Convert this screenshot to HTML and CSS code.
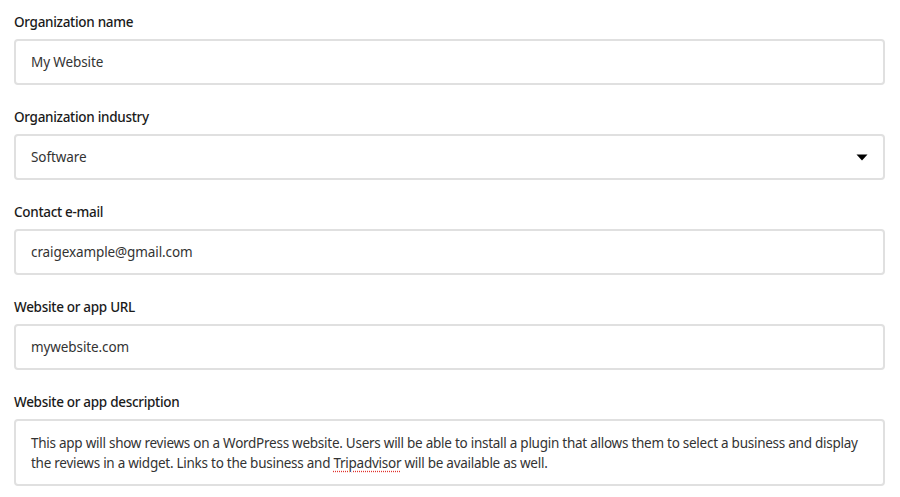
FILE: index.html
```html
<!DOCTYPE html>
<html lang="en">
<head>
<meta charset="utf-8">
<title>Organization form</title>
<link rel="stylesheet" href="styles.css">
</head>
<body>
<form class="form">
  <div class="field">
    <label class="label">Organization name</label>
    <div class="box">My Website</div>
  </div>
  <div class="field">
    <label class="label">Organization industry</label>
    <div class="box select">
      <span>Software</span>
      <svg class="caret" width="12" height="7" viewBox="0 0 12 7"><path d="M0.5 0.5 L11.5 0.5 L6 6.5 Z" fill="#000"/></svg>
    </div>
  </div>
  <div class="field">
    <label class="label">Contact e-mail</label>
    <div class="box">craigexample@gmail.com</div>
  </div>
  <div class="field">
    <label class="label">Website or app URL</label>
    <div class="box">mywebsite.com</div>
  </div>
  <div class="field">
    <label class="label">Website or app description</label>
    <div class="box area">This app will show reviews on a WordPress website. Users will be able to install a plugin that allows them to select a business and display the reviews in a widget. Links to the business and <span class="spell">Tripadvisor</span> will be available as well.</div>
  </div>
</form>
</body>
</html>
```

FILE: styles.css
```css
html, body {
  margin: 0;
  padding: 0;
  background: #fff;
}
body {
  font-family: "Noto Sans", "Liberation Sans", sans-serif;
  color: #1f1f1f;
  padding: 12px 15px 0 14px;
}
.form {
  display: flex;
  flex-direction: column;
  gap: 22px;
}
.field {
  display: flex;
  flex-direction: column;
}
.label {
  font-size: 13.5px;
  font-weight: 500;
  letter-spacing: -0.3px;
  line-height: 20px;
  margin-bottom: 7px;
  color: #1a1a1a;
}
.box {
  box-sizing: border-box;
  height: 46px;
  border: 2px solid #e0e0e0;
  border-radius: 4px;
  padding: 0 15px;
  display: flex;
  align-items: center;
  font-size: 13.5px;
  letter-spacing: -0.1px;
  color: #333;
}
.select {
  justify-content: space-between;
  padding-right: 15px;
}
.caret {
  display: block;
}
.area {
  display: block;
  height: 67px;
  padding: 12px 15px;
  line-height: 20px;
  letter-spacing: -0.26px;
}
.spell {
  text-decoration: underline dotted #e0332f;
  text-underline-offset: 3px;
}
```
